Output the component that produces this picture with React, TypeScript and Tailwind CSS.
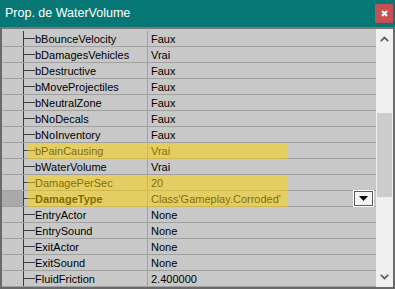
import React from 'react';

type Row = { name: string; value: string; mark?: boolean; selected?: boolean };

const rows: Row[] = [
  { name: 'bBounceVelocity', value: 'Faux' },
  { name: 'bDamagesVehicles', value: 'Vrai' },
  { name: 'bDestructive', value: 'Faux' },
  { name: 'bMoveProjectiles', value: 'Faux' },
  { name: 'bNeutralZone', value: 'Faux' },
  { name: 'bNoDecals', value: 'Faux' },
  { name: 'bNoInventory', value: 'Faux' },
  { name: 'bPainCausing', value: 'Vrai', mark: true },
  { name: 'bWaterVolume', value: 'Vrai' },
  { name: 'DamagePerSec', value: '20', mark: true },
  { name: 'DamageType', value: "Class'Gameplay.Corroded'", mark: true, selected: true },
  { name: 'EntryActor', value: 'None' },
  { name: 'EntrySound', value: 'None' },
  { name: 'ExitActor', value: 'None' },
  { name: 'ExitSound', value: 'None' },
  { name: 'FluidFriction', value: '2.400000' },
];

const PropRow = ({ row }: { row: Row }) => (
  <div className="relative flex h-[16px] border-b border-[#a0a0a0]">
    <div className={`w-[21px] shrink-0 ${row.selected ? 'bg-[#a9a9a9]' : ''}`} />
    <div className="relative flex w-[124px] shrink-0 items-center border-l border-[#3c3c3c]">
      <div className="h-px w-[11px] bg-[#3c3c3c]" />
      <span className={`pt-px ${row.selected ? 'font-bold' : ''}`}>{row.name}</span>
    </div>
    <div className="flex flex-1 items-center border-l border-[#a0a0a0] pl-[3px]">
      <span className="pt-px">{row.value}</span>
      {row.selected && (
        <div className="ml-auto mr-[3px] flex h-[15px] w-[19px] items-center justify-center border border-[#5a5a5a] bg-[#f4f4f4] outline outline-1 outline-white">
          <svg width="9" height="5" viewBox="0 0 9 5">
            <path d="M0 0h9L4.5 5z" fill="#000" />
          </svg>
        </div>
      )}
    </div>
    {row.mark && (
      <div className="pointer-events-none absolute left-[25px] top-0 -bottom-px w-[260px] bg-[#ffd400]/50" />
    )}
  </div>
);

const App = () => {
  return (
    <div className="flex h-[289px] w-[395px] flex-col bg-[#077775] font-['Liberation_Sans',Arial,sans-serif]">
      <div className="flex h-[27px] shrink-0 items-center justify-between pl-[5px] pr-[2px]">
        <span className="text-[12.5px] text-white">Prop. de WaterVolume</span>
        <button className="flex h-[19px] w-[18px] items-center justify-center bg-[#c75050]">
          <svg width="7" height="7" viewBox="0 0 7 7">
            <path d="M1 1l5 5M6 1L1 6" stroke="#fff" strokeWidth="2" />
          </svg>
        </button>
      </div>
      <div className="flex flex-1 border-x-2 border-b-2 border-t-2 border-[#6a6a6a] border-t-[#7a7a7a] bg-[#f0f0f0]">
        <div className="flex-1 bg-[#c8c8c8] pt-[2px] text-[11px] leading-none text-[#000]">
          {rows.map((r) => (
            <PropRow key={r.name} row={r} />
          ))}
        </div>
        <div className="flex w-[17px] shrink-0 flex-col items-center bg-[#f0f0f0]">
          <svg className="mt-[7px]" width="9" height="6" viewBox="0 0 9 6">
            <path d="M0.8 5.2L4.5 1.5l3.7 3.7" fill="none" stroke="#606060" strokeWidth="1.8" />
          </svg>
          <div className="mt-[71px] h-[84px] w-[15px] bg-[#cdcdcd]" />
          <svg className="mt-auto mb-[7px]" width="9" height="6" viewBox="0 0 9 6">
            <path d="M0.8 0.8L4.5 4.5l3.7-3.7" fill="none" stroke="#606060" strokeWidth="1.8" />
          </svg>
        </div>
      </div>
    </div>
  );
};

export default App;
